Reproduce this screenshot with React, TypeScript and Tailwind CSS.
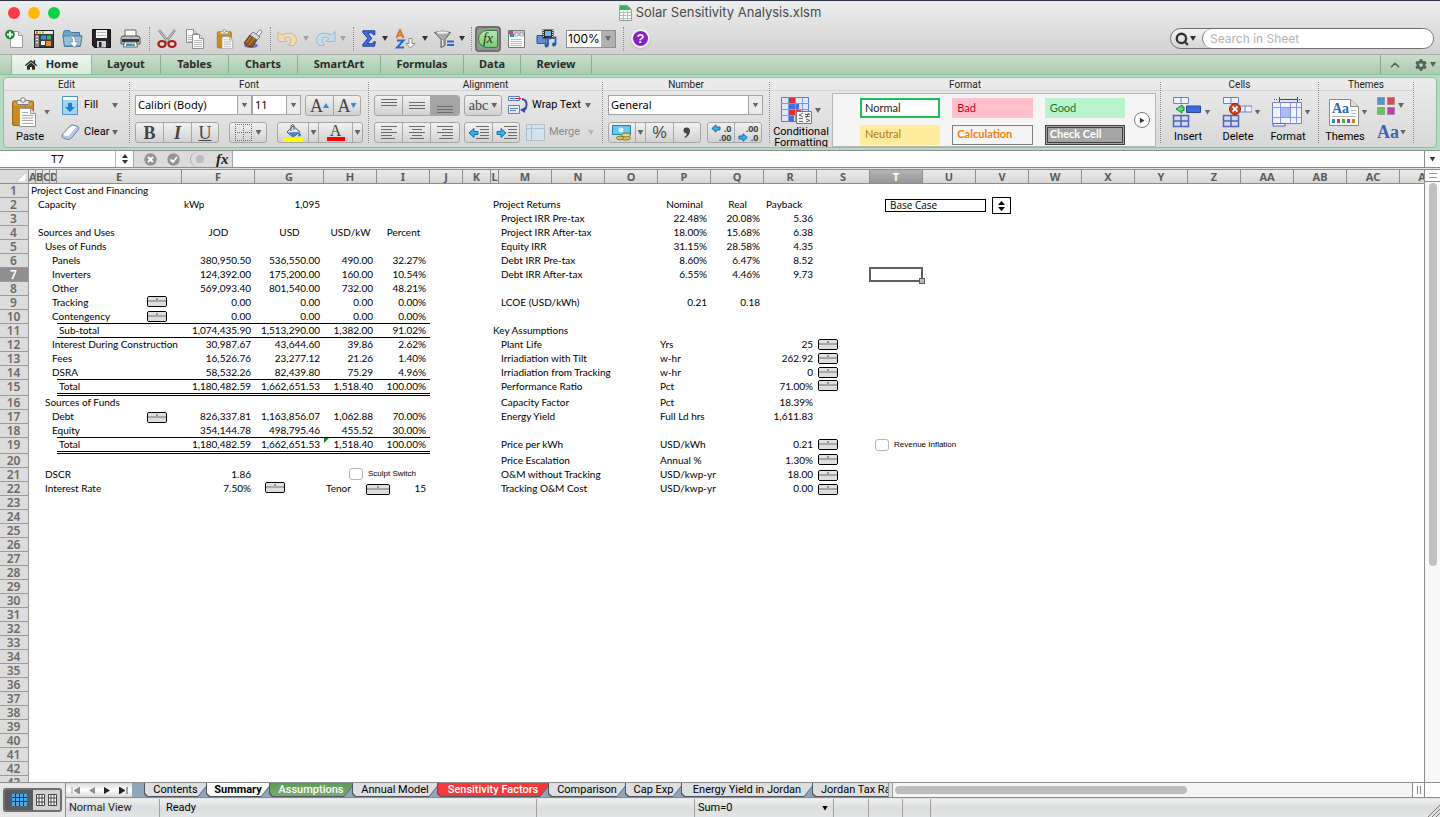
import type { ReactNode } from "react";
import { ChevronUp, Search } from "lucide-react";
import { FaHome, FaCog } from "react-icons/fa";

type Cell = { t?: string; a?: "l" | "r" | "c"; node?: ReactNode; flag?: boolean };

const columns: [string, number][] = [
  ["A", 7], ["B", 7], ["C", 7], ["D", 7], ["E", 125], ["F", 73], ["G", 69], ["H", 53], ["I", 53], ["J", 33], ["K", 28], ["L", 8],
  ["M", 53], ["N", 53], ["O", 53], ["P", 53], ["Q", 53], ["R", 53], ["S", 53], ["T", 53], ["U", 53], ["V", 53], ["W", 53],
  ["X", 53], ["Y", 53], ["Z", 53], ["AA", 53], ["AB", 53], ["AC", 53], ["AD", 53],
];
const rowHeaderWidth = 29;
const sheetWidth = columns.reduce((sum, c) => sum + c[1], rowHeaderWidth);
const rowNumbers = Array.from({ length: 43 }, (_, i) => i + 1);

const l = (t: string): Cell => ({ t });
const r = (t: string): Cell => ({ t, a: "r" });
const c = (t: string): Cell => ({ t, a: "c" });

function Spinner({ label, wide }: { label: string; wide?: boolean }) {
  return (
    <span className={`flex h-[11px] flex-col overflow-hidden rounded-[2px] border border-black bg-[#d9dadb] ${wide ? "w-6" : "w-5"}`}>
      <button aria-label={`Increase ${label}`} className="flex h-[5px] w-full justify-center border-b-2 border-[#a3a8ac] bg-[#dfe0e2]">
        <span className="mt-px h-[2px] w-[2px] bg-[#8f9499]" />
      </button>
      <button aria-label={`Decrease ${label}`} className="h-1 w-full bg-[#dcdddd]" />
    </span>
  );
}

function SheetCheck({ label }: { label: string }) {
  return (
    <label className="flex items-center gap-[5px] whitespace-nowrap font-['Liberation_Sans',sans-serif] text-[8px] leading-3">
      <input type="checkbox" className="h-3 w-[14px] appearance-none rounded-[3px] border border-[#b5b5b5] bg-white" />
      {label}
    </label>
  );
}

const spin = (label: string, cls: string, wide?: boolean): Cell => ({
  node: <div className={`absolute ${cls}`}><Spinner label={label} wide={wide} /></div>,
});

const cells: Record<string, Cell> = {
  A1: l("Project Cost and Financing"),
  B2: l("Capacity"), F2: l("kWp"), G2: r("1,095"),
  B4: l("Sources and Uses"), F4: c("JOD"), G4: c("USD"), H4: c("USD/kW"), I4: c("Percent"),
  C5: l("Uses of Funds"),
  D6: l("Panels"), F6: r("380,950.50"), G6: r("536,550.00"), H6: r("490.00"), I6: r("32.27%"),
  D7: l("Inverters"), F7: r("124,392.00"), G7: r("175,200.00"), H7: r("160.00"), I7: r("10.54%"),
  D8: l("Other"), F8: r("569,093.40"), G8: r("801,540.00"), H8: r("732.00"), I8: r("48.21%"),
  D9: l("Tracking"), E9: spin("tracking", "left-[90px] top-0"), F9: r("0.00"), G9: r("0.00"), H9: r("0.00"), I9: r("0.00%"),
  D10: l("Contengency"), E10: spin("contingency", "left-[90px] top-px"), F10: r("0.00"), G10: r("0.00"), H10: r("0.00"), I10: r("0.00%"),
  E11: l("Sub-total"), F11: r("1,074,435.90"), G11: r("1,513,290.00"), H11: r("1,382.00"), I11: r("91.02%"),
  D12: l("Interest During Construction"), F12: r("30,987.67"), G12: r("43,644.60"), H12: r("39.86"), I12: r("2.62%"),
  D13: l("Fees"), F13: r("16,526.76"), G13: r("23,277.12"), H13: r("21.26"), I13: r("1.40%"),
  D14: l("DSRA"), F14: r("58,532.26"), G14: r("82,439.80"), H14: r("75.29"), I14: r("4.96%"),
  E15: l("Total"), F15: r("1,180,482.59"), G15: r("1,662,651.53"), H15: r("1,518.40"), I15: r("100.00%"),
  C16: l("Sources of Funds"),
  D17: l("Debt"), E17: spin("debt", "left-[90px] top-[2px]"), F17: r("826,337.81"), G17: r("1,163,856.07"), H17: r("1,062.88"), I17: r("70.00%"),
  D18: l("Equity"), F18: r("354,144.78"), G18: r("498,795.46"), H18: r("455.52"), I18: r("30.00%"),
  E19: l("Total"), F19: r("1,180,482.59"), G19: r("1,662,651.53"), H19: { t: "1,518.40", a: "r", flag: true }, I19: r("100.00%"),
  C21: l("DSCR"), F21: r("1.86"),
  H21: { node: <div className="absolute left-[25px] top-0"><SheetCheck label="Sculpt Switch" /></div> },
  C22: l("Interest Rate"), F22: r("7.50%"), G22: spin("interest rate", "left-[10px] top-0"),
  H22: { t: "Tenor", node: <div className="absolute left-[42px] top-[2px]"><Spinner label="tenor" wide /></div> }, I22: r("15"),

  L2: l("Project Returns"), P2: c("Nominal"), Q2: c("Real"), R2: l("Payback"),
  M3: l("Project IRR Pre-tax"), P3: r("22.48%"), Q3: r("20.08%"), R3: r("5.36"),
  M4: l("Project IRR After-tax"), P4: r("18.00%"), Q4: r("15.68%"), R4: r("6.38"),
  M5: l("Equity IRR"), P5: r("31.15%"), Q5: r("28.58%"), R5: r("4.35"),
  M6: l("Debt IRR Pre-tax"), P6: r("8.60%"), Q6: r("6.47%"), R6: r("8.52"),
  M7: l("Debt IRR After-tax"), P7: r("6.55%"), Q7: r("4.46%"), R7: r("9.73"),
  M9: l("LCOE (USD/kWh)"), P9: r("0.21"), Q9: r("0.18"),
  L11: l("Key Assumptions"),
  M12: l("Plant Life"), P12: l("Yrs"), R12: r("25"), S12: spin("plant life", "left-px top-px"),
  M13: l("Irriadiation with Tilt"), P13: l("w-hr"), R13: r("262.92"), S13: spin("tilt", "left-px top-px"),
  M14: l("Irriadiation from Tracking"), P14: l("w-hr"), R14: r("0"), S14: spin("irradiation", "left-px top-px"),
  M15: l("Performance Ratio"), P15: l("Pct"), R15: r("71.00%"), S15: spin("performance ratio", "left-px top-0"),
  M16: l("Capacity Factor"), P16: l("Pct"), R16: r("18.39%"),
  M17: l("Energy Yield"), P17: l("Full Ld hrs"), R17: r("1,611.83"),
  M19: l("Price per kWh"), P19: l("USD/kWh"), R19: r("0.21"), S19: spin("price", "left-px top-px"),
  M20: l("Price Escalation"), P20: l("Annual %"), R20: r("1.30%"), S20: spin("escalation", "left-px top-0"),
  M21: l("O&M without Tracking"), P21: l("USD/kwp-yr"), R21: r("18.00"), S21: spin("O&M", "left-px top-[2px]"),
  M22: l("Tracking O&M Cost"), P22: l("USD/kwp-yr"), R22: r("0.00"), S22: spin("tracking O&M", "left-px top-[2px]"),

  T2: {
    node: (
      <div className="absolute -top-px left-[15px] flex items-center gap-[6px]">
        <div className="h-[13px] w-[101px] border border-black bg-white pl-1 font-['Open_Sans',sans-serif] text-[10px] leading-[11px]">Base Case</div>
        <button aria-label="Choose case" className="flex h-[17px] w-[19px] items-center justify-center border border-black bg-white">
          <svg width="7" height="10" viewBox="0 0 7 10"><path d="M3.5 0 7 4H0zM3.5 10 0 6h7z" /></svg>
        </button>
      </div>
    ),
  },
  T7: {
    node: (
      <div className="absolute -left-px -top-px h-[15px] w-[54px] border-2 border-[#5f5f63]">
        <span className="absolute -bottom-1 -right-1 h-[6px] w-[6px] border border-[#5f5f63] bg-[#b9b9bd]" />
      </div>
    ),
  },
  T19: { node: <div className="absolute left-[5px] top-px"><SheetCheck label="Revenue Inflation" /></div> },
};

// black rules under the totals, columns E to I
const singleRules = [10, 11, 14, 18];
const doubleRules = [15, 19];
const ruledColumns = ["E", "F", "G", "H", "I"];

function ruleClass(col: string, row: number) {
  if (!ruledColumns.includes(col)) return "";
  if (singleRules.includes(row)) return "border-b border-black";
  if (doubleRules.includes(row)) return "border-b-3 border-double border-black";
  return "";
}

const alignClass = { l: "text-left pl-[2px]", r: "text-right pr-1", c: "text-center" };

function Sheet() {
  return (
    <table className="table-fixed border-separate border-spacing-0 font-[Lato,sans-serif] text-[10px] text-black" style={{ width: sheetWidth }}>
      <colgroup>
        <col style={{ width: rowHeaderWidth }} />
        {columns.map(([name, w]) => <col key={name} style={{ width: w }} />)}
      </colgroup>
      <thead>
        <tr className="h-[14px] font-['Noto_Sans',sans-serif] text-[11px] leading-[13px] text-[#5c5c5c]">
          <th className="border-b border-r border-[#8c8c8c] bg-[#dcdcdc] p-0">
            <svg className="ml-auto mr-[2px]" width="10" height="10" viewBox="0 0 10 10"><path d="M10 0v10H0z" fill="#fff" stroke="#b0b0b0" strokeWidth="0.6" /></svg>
          </th>
          {columns.map(([name]) => (
            <th key={name} scope="col" className={`overflow-hidden border-b border-r border-[#8c8c8c] p-0 font-bold ${name === "T" ? "bg-linear-to-b from-[#b4b4b4] to-[#979797] text-white" : "bg-linear-to-b from-[#ebebeb] to-[#d6d6d6]"}`}>
              {name}
            </th>
          ))}
        </tr>
      </thead>
      <tbody>
        {rowNumbers.map((row) => (
          <tr key={row} className={doubleRules.includes(row) ? "h-4" : "h-[14px]"}>
            <th scope="row" className={`border-b border-r border-[#9a9a9a] p-0 pr-px align-top font-['Noto_Sans',sans-serif] text-xs font-semibold leading-[13px] ${row === 7 ? "bg-[#8f8f8f] text-white" : "bg-[#dcdcdc] text-[#6b6b6b]"}`}>
              {row}
            </th>
            {columns.map(([name]) => {
              const cell = cells[name + row];
              return (
                <td key={name} className={`relative whitespace-nowrap p-0 align-top leading-[13px] ${alignClass[cell?.a ?? "l"]} ${ruleClass(name, row)}`}>
                  {cell?.flag && <span className="absolute left-0 top-0 h-[5px] w-[5px] bg-[#148a1c] [clip-path:polygon(0_0,100%_0,0_100%)]" />}
                  {cell?.a === "r" || cell?.a === "c" ? cell.t : cell?.t && <span className="block w-0">{cell.t}</span>}
                  {cell?.node}
                </td>
              );
            })}
          </tr>
        ))}
      </tbody>
    </table>
  );
}

/* ---------- small shared pieces ---------- */

function Caret({ className = "bg-[#666]" }: { className?: string }) {
  return <span className={`inline-block h-[5px] w-[6px] shrink-0 [clip-path:polygon(0_0,100%_0,50%_100%)] ${className}`} />;
}

function Dots({ className = "" }: { className?: string }) {
  return <span className={`w-0 shrink-0 border-l border-dotted border-[#8c8c8c] ${className}`} />;
}

function Tool({ label, width = "w-[29px]", children }: { label: string; width?: string; children: ReactNode }) {
  return <button aria-label={label} className={`flex h-[26px] shrink-0 items-center justify-center ${width}`}>{children}</button>;
}

function Svg({ w, h, children }: { w: number; h: number; children: ReactNode }) {
  return <svg width={w} height={h} viewBox={`0 0 ${w} ${h}`} fill="none" className="shrink-0">{children}</svg>;
}

function PageIcon({ x = 0, y = 0, w = 12, h = 16 }: { x?: number; y?: number; w?: number; h?: number }) {
  const lines = [];
  for (let i = 6; i < h - 1; i += 2) lines.push(`M2 ${i}.5h${w - 4}`);
  return (
    <g transform={`translate(${x} ${y})`}>
      <path d={`M.5 .5h${w - 5}l4 4v${h - 5}H.5z`} fill="#fcfcfc" stroke="#8f8f8f" />
      <path d={`M${w - 4.5} .5v4h4`} stroke="#8f8f8f" fill="#e2e2e2" />
      <path d={lines.join("")} stroke="#b5b5b5" />
    </g>
  );
}

function ClipboardIcon({ w, h }: { w: number; h: number }) {
  return (
    <svg width={w} height={h} viewBox="0 0 24 30" fill="none" className="shrink-0">
      <rect x="0.5" y="4" width="21" height="24.5" rx="1.5" fill="#c98b1e" stroke="#9a6812" />
      <path d="M2 5.500h18v3H2z" fill="#dca53c" />
      <rect x="5" y="3.500" width="12" height="4" rx="1" fill="#e9e9e9" stroke="#7d7d7d" />
      <circle cx="11" cy="3" r="2.300" fill="#f4f4f4" stroke="#7d7d7d" />
      <path d="M7.500 11.500h11l5 5v13h-16z" fill="#fbfbfb" stroke="#989898" />
      <path d="M18.500 11.500v5h5" fill="#dedede" stroke="#989898" />
      <path d="M10 15.500h6M10 18.500h11M10 21h11M10 23.500h11M10 26.500h11" stroke="#aaa" />
    </svg>
  );
}

/* ---------- title bar and standard toolbar ---------- */

function TitleBar() {
  return (
    <div className="relative flex h-6 items-center justify-center">
      <div className="absolute left-2 flex gap-2">
        <button aria-label="Close" className="h-3 w-3 rounded-full bg-[#fc3b46]" />
        <button aria-label="Minimize" className="h-3 w-3 rounded-full bg-[#fdb908]" />
        <button aria-label="Zoom window" className="h-3 w-3 rounded-full bg-[#09d144]" />
      </div>
      <div className="flex items-center gap-1 font-[Inter,sans-serif] text-[13px] text-[#4a4a4a]">
        <Svg w={13} h={16}>
          <path d="M.5 .5h8l4 4v11H.5z" fill="#fafafa" stroke="#999" />
          <path d="M1 1h7.500l3 3v1H1z" fill="#37b35a" />
          <path d="M1 7.500h11M1 10.500h11M1 13.500h11M4.500 6v9M8.500 6v9" stroke="#a9c8b1" />
        </Svg>
        Solar Sensitivity Analysis.xlsm
      </div>
    </div>
  );
}

function Toolbar() {
  return (
    <div className="flex h-[29px] items-center pb-[2px]">
      <Tool label="New">
        <Svg w={20} h={20}>
          <path d="M5.500 2.500h8l4 4v12h-12z" fill="#fdfdfd" stroke="#999" /><path d="M13.500 2.500v4h4" stroke="#999" fill="#e6e6e6" />
          <circle cx="5" cy="5.500" r="4.800" fill="#128a2c" /><path d="M5 2.500v6M2 5.500h6" stroke="#fff" strokeWidth="2" />
        </Svg>
      </Tool>
      <Tool label="Template gallery">
        <Svg w={20} h={18}>
          <rect x=".5" y=".5" width="19" height="17" fill="#3c3c3c" stroke="#222" /><path d="M1 1h18v3H1z" fill="#e8e8e8" />
          <path d="M2 1.500h2v2H2z" fill="#e33" /><path d="M5 1.500h2v2H5z" fill="#e9b22a" /><path d="M8 1.500h2v2H8z" fill="#4b4" />
          <path d="M1 5h4v12H1z" fill="#8a8a8a" /><path d="M7 5.500h5v4H7z" fill="#3a8ee6" /><path d="M13 5.500h4v4h-4z" fill="#37b36a" />
          <path d="M7 11h4v4H7z" fill="#f0f0f0" /><path d="M12 11h5v5h-5z" fill="#f08a1f" /><path d="M2 6.500h2M2 9.500h2M2 12.500h2" stroke="#eee" />
        </Svg>
      </Tool>
      <Tool label="Open">
        <Svg w={21} h={20}>
          <path d="M1.500 3.500q0-2 2-2h4l2 2h8v3h2l-1.500 11H2.500L1 7z" fill="#6fa3c4" stroke="#47789a" /><path d="M1 7h19l-1.500 10h-16z" fill="#94c0da" stroke="#4f82a3" />
          <path d="M9.500 7q4 0 4 6h3l-4 6-5-6h3q0-4-2-6z" fill="#fff" stroke="#8a9aa5" />
        </Svg>
      </Tool>
      <Tool label="Save">
        <Svg w={19} h={19}>
          <path d="M.5 .5h18v18h-16l-2-2z" fill="#24262b" stroke="#111" /><path d="M4 1h11v8H4z" fill="#f3f3f3" /><path d="M5 3.500h9M5 6.500h9" stroke="#b9b9b9" />
          <path d="M5 12h9v6.500H5z" fill="#c9cdd3" /><path d="M7 13h2.500v5H7z" fill="#24262b" />
        </Svg>
      </Tool>
      <Tool label="Print">
        <Svg w={21} h={19}>
          <path d="M5 1h11v7H5z" fill="#fff" stroke="#666" /><path d="M1 10q0-3 2-3h15q2 0 2 3v5H1z" fill="#bdbdbd" stroke="#555" /><path d="M2 10h17v3H2z" fill="#333" />
          <path d="M4.500 13h12l1 5h-14z" fill="#fff" stroke="#666" /><path d="M6 14.500h5v2.500H6z" fill="#2c8fdc" /><path d="M11 14.500h4v2.500h-4z" fill="#37b36a" />
        </Svg>
      </Tool>
      <Dots className="ml-1 mr-[2px] h-6" />
      <Tool label="Cut">
        <Svg w={20} h={20}>
          <path d="M2 1 12 14M18 1 8 14" stroke="#858585" strokeWidth="2.600" /><path d="M2 1 12 14M18 1 8 14" stroke="#e4e4e4" strokeWidth=".8" />
          <ellipse cx="5" cy="15" rx="3.600" ry="3" stroke="#a81d16" strokeWidth="2.200" /><ellipse cx="15" cy="15" rx="3.600" ry="3" stroke="#a81d16" strokeWidth="2.200" />
        </Svg>
      </Tool>
      <Tool label="Copy"><Svg w={19} h={20}><PageIcon w={12} h={14} /><PageIcon x={6} y={5} w={12} h={15} /></Svg></Tool>
      <Tool label="Paste"><ClipboardIcon w={18} h={20} /></Tool>
      <Tool label="Format painter">
        <Svg w={21} h={20}>
          <ellipse cx="8" cy="16.500" rx="7" ry="2.500" fill="#5b4fd0" opacity=".8" />
          <path d="m1 14 6-8 7 5-5 7q-5 0-8-4z" fill="#8a5a22" stroke="#5d3a10" /><path d="m3 14 5-6M6 16l5-7" stroke="#c08a3c" />
          <path d="m7 6 3-3 7 5-3 3z" fill="#d9d9d9" stroke="#777" /><path d="m13 5 3.500-4q2.500-.5 2.500 2l-3 4z" fill="#f5f5f5" stroke="#888" />
        </Svg>
      </Tool>
      <Dots className="ml-[2px] mr-[2px] h-6" />
      <Tool label="Undo" width="w-7">
        <Svg w={21} h={17}><path d="M1 1.500v10h9L7 8.500Q12 5.500 13.500 8.500T11.500 15.500h5.500Q21.500 10 18 5.500T4.500 5z" fill="#efdcb6" stroke="#d5b880" /></Svg>
      </Tool>
      <Caret className="mx-[2px] bg-[#a3a3a3]" />
      <Tool label="Redo">
        <Svg w={21} h={17}><path d="M20 1.500v10h-9L14 8.500Q9 5.500 7.500 8.500T9.500 15.500H4Q-.5 10 3 5.500T16.500 5z" fill="#c6dce8" stroke="#96bacf" /></Svg>
      </Tool>
      <Caret className="bg-[#a3a3a3]" />
      <Dots className="ml-[7px] mr-1 h-6" />
      <Tool label="AutoSum" width="w-[22px]">
        <Svg w={14} h={17}><path d="M.8 .8h12v4h-1.500q0-1.800-1.700-1.800H5.500l4.300 5.300L5 13.700h4.800q1.700 0 2-2h1.500l-.8 4.500H.8v-1.700l5-6.200-5-5.800z" fill="#3e6fdf" stroke="#1d3aa6" /></Svg>
      </Tool>
      <Caret className="mx-[2px] bg-[#333]" />
      <Tool label="Sort" width="w-[31px]">
        <Svg w={21} h={20}>
          <path d="M1.500 9 5 1l3.500 8M2.800 6.500h4.500" stroke="#d5782a" strokeWidth="2" /><path d="M2 11.500h6.500L2 18.500h7" stroke="#2f66c9" strokeWidth="2" />
          <path d="M14 9.500h3v5h3l-4.500 4.500-4.500-4.500h3z" fill="#fff" stroke="#8c8c8c" />
        </Svg>
      </Tool>
      <Caret className="mx-px bg-[#333]" />
      <Tool label="Filter" width="w-[30px]">
        <Svg w={21} h={18}>
          <path d="M.5 2.500q8-3 16 0L11 9.500v6l-4 2v-8z" fill="#a9a9a9" stroke="#5f5f5f" /><ellipse cx="8.500" cy="2.500" rx="6" ry="1.300" fill="#ececec" /><path d="M8.500 10v6" stroke="#eee" />
          <path d="M13 11.500h7M13 15h7" stroke="#2f66c9" strokeWidth="2" />
        </Svg>
      </Tool>
      <Caret className="bg-[#333]" />
      <Dots className="ml-[6px] mr-[3px] h-6" />
      <button aria-label="Formula builder" className="flex h-[26px] w-[26px] shrink-0 items-center justify-center rounded-[4px] border-2 border-[#6f6f6f] bg-[#8f9a90]">
        <span className="flex h-[18px] w-5 items-center justify-center rounded-l-[9px] rounded-r-[2px] border border-[#3c7a3c] bg-linear-to-b from-[#b9e5ad] to-[#7cc878] font-['Liberation_Serif',serif] text-sm italic leading-4 text-[#123d12]">fx</span>
      </button>
      <Tool label="Toolbox" width="w-[31px]">
        <Svg w={17} h={19}>
          <path d="M.5 1.500h16v17H.5z" fill="#fdfdfd" stroke="#777" /><path d="M1 2h15v5H1z" fill="#c4c9d0" /><path d="M1 2h4v3H1z" fill="#e9442b" /><path d="M2 5h4v3H2z" fill="#2f88d8" />
          <path d="M7 4h3v3H7zM12 4h3v3h-3z" fill="#fff" stroke="#888" strokeWidth=".7" /><path d="M3 10.500h11M3 12.500h11M3 14.500h11M3 16.500h11" stroke="#bdbdbd" />
        </Svg>
      </Tool>
      <Tool label="Media" width="w-7">
        <Svg w={21} h={19}>
          <path d="M1 6.500h9v8H1z" fill="#5b8fd8" stroke="#2a519b" /><path d="M6.500 .5h11v9h-11z" fill="#2a2a2a" /><path d="M9 2h6v5H9z" fill="#6fb8e8" /><path d="M7.500 1v8M16.500 1v8" stroke="#ddd" strokeDasharray="1 1" />
          <path d="M12 16.500V9.500l7.500-1v7" stroke="#2858a6" strokeWidth="1.800" /><circle cx="10.500" cy="16.500" r="2" fill="#2858a6" /><circle cx="18" cy="15.500" r="2" fill="#2858a6" />
        </Svg>
      </Tool>
      <div className="ml-[6px] flex h-[18px] w-[50px] shrink-0 border border-[#8f8f8f] bg-white">
        <input aria-label="Zoom level" defaultValue="100%" className="w-[34px] pl-[1px] font-[Inter,sans-serif] text-[12px] text-black" />
        <button aria-label="Zoom list" className="flex flex-1 items-center justify-center bg-[#b1b1b1]"><Caret /></button>
      </div>
      <Dots className="ml-[7px] mr-[7px] h-6" />
      <button aria-label="Help" className="flex h-[19px] w-[19px] shrink-0 items-center justify-center rounded-full border-2 border-[#f3f3f3] bg-[#8b1ec9] font-['Liberation_Sans',sans-serif] text-[13px] font-bold leading-4 text-white shadow">?</button>
      <label className="ml-auto mr-[6px] flex h-[21px] w-[264px] shrink-0 items-center rounded-full border border-[#6e6e6e] bg-linear-to-b from-[#f4f4f4] to-[#d4d4d4] pl-1">
        <Search size={14} strokeWidth={4} className="text-[#333]" />
        <Caret className="ml-px bg-[#333]" />
        <input aria-label="Search in Sheet" placeholder="Search in Sheet" className="ml-[6px] h-full min-w-0 flex-1 rounded-full border-l border-[#777] bg-white pl-[7px] font-[Inter,sans-serif] text-[12px] placeholder-[#b4b4b4]" />
      </label>
    </div>
  );
}

/* ---------- ribbon ---------- */

const ribbonTabs = [
  ["Layout", "w-[69px]"], ["Tables", "w-[68px]"], ["Charts", "w-[69px]"], ["SmartArt", "w-[83px]"],
  ["Formulas", "w-[83px]"], ["Data", "w-[57px]"], ["Review", "w-[71px]"],
];

function RibbonTabs() {
  return (
    <div className="flex h-5 border-b border-[#8fbf9d] bg-linear-to-b from-[#c9dfcb] to-[#a9cbae] font-['Noto_Sans',sans-serif] text-[11px] font-bold text-[#2b2b2b]">
      <span className="w-3 border-r border-[#8ebb97]" />
      <button className="flex w-20 items-center justify-center gap-[9px] border-r border-[#8ebb97] bg-linear-to-b from-[#eef6ef] to-[#d9ebdd]">
        <FaHome size={12} />
        Home
      </button>
      {ribbonTabs.map(([name, width]) => (
        <button key={name} className={`border-r border-[#84b48f] ${width}`}>{name}</button>
      ))}
      <div className="ml-auto flex items-center gap-[13px] border-l border-[#84a88b] pl-[7px] pr-1 text-[#56645a]">
        <button aria-label="Collapse ribbon"><ChevronUp size={14} strokeWidth={3} /></button>
        <button aria-label="Ribbon settings" className="flex items-center gap-[3px]"><FaCog size={12} /><Caret className="bg-[#56645a]" /></button>
      </div>
    </div>
  );
}

function Group({ title, width, children }: { title: string; width: string; children: ReactNode }) {
  return (
    <section className={`flex shrink-0 flex-col ${width}`}>
      <h2 className="h-[13px] border-b border-[#d2d2d2] text-center text-[10px] leading-[13px] text-[#222]">{title}</h2>
      <div className="flex flex-1 pt-1">{children}</div>
    </section>
  );
}

function Seg({ label, width = "w-7", on, children }: { label: string; width?: string; on?: boolean; children: ReactNode }) {
  return (
    <button aria-label={label} className={`flex h-full items-center justify-center border-r border-[#a6a6a6] last:border-r-0 ${width} ${on ? "bg-[#a5a5a5]" : ""}`}>{children}</button>
  );
}

function Segs({ children, className = "" }: { children: ReactNode; className?: string }) {
  return <div className={`flex h-[21px] shrink-0 overflow-hidden rounded-[3px] border border-[#a6a6a6] bg-linear-to-b from-[#f1f1f1] to-[#d2d2d2] ${className}`}>{children}</div>;
}

function Combo({ label, value, width }: { label: string; value: string; width: string }) {
  return (
    <div className={`flex h-5 shrink-0 border border-[#a3a3a3] bg-white font-['Noto_Sans',sans-serif] ${width}`}>
      <input aria-label={label} defaultValue={value} className="min-w-0 flex-1 pl-[2px] text-[11px] text-black" />
      <button aria-label={`${label} list`} className="flex w-[14px] items-center justify-center border-l border-[#a3a3a3] bg-[#ececec]"><Caret /></button>
    </div>
  );
}

const lineArt: Record<string, string> = {
  top: "M0 .5h16M0 3.500h16M0 6.500h16",
  middle: "M0 3.500h16M0 6.500h16M0 9.500h16",
  bottom: "M0 7.500h16M0 10.500h16M0 13.500h16",
  left: "M0 .5h16M0 3.500h11M0 6.500h16M0 9.500h11M0 12.500h14",
  center: "M0 .5h16M3 3.500h10M0 6.500h16M3 9.500h10M1 12.500h14",
  right: "M0 .5h16M5 3.500h11M0 6.500h16M5 9.500h11M2 12.500h14",
};

function Lines({ kind }: { kind: string }) {
  return <Svg w={16} h={14}><path d={lineArt[kind]} stroke="#6b6b6b" /></Svg>;
}

function ArrowIcon({ right }: { right?: boolean }) {
  return (
    <Svg w={21} h={14}>
      <path d="M8 .5h13M12 3.500h9M12 6.500h9M12 9.500h9M8 12.500h13" stroke="#6b6b6b" />
      <path d={right ? "M1 5.500h4v-3l5 4.500-5 4.500v-3H1z" : "M10 5.500H6v-3L1 7l5 4.500v-3h4z"} fill="#35b5ea" stroke="#0d6ea8" />
    </Svg>
  );
}

function DecimalIcon({ less }: { less?: boolean }) {
  return (
    <span className="relative block h-[18px] w-[21px] font-['Noto_Sans',sans-serif] text-[9px] font-bold leading-[9px] text-[#444]">
      <span className="absolute right-0 top-0">{less ? ".00" : ".0"}</span>
      <span className="absolute bottom-0 right-0">{less ? ".0" : ".00"}</span>
      <svg className={`absolute left-0 ${less ? "bottom-0 rotate-180" : "top-0"}`} width="10" height="9" viewBox="0 0 10 9"><path d="M9 3H5V.8L.8 4.500 5 8.200V6h4z" fill="#35b5ea" stroke="#0d6ea8" /></svg>
    </span>
  );
}

function CellBlocks({ children }: { children: ReactNode }) {
  return (
    <Svg w={30} h={31}>
      <path d="M1.500 .5h15v6h-15zM9 .5v6" fill="#eef2ff" stroke="#6f80cc" />
      <path d="M1.500 18.500h15v11h-15zM9 18.500v11M1.500 24h15" fill="#cfdafa" stroke="#5364b0" strokeWidth="1.500" />
      {children}
    </Svg>
  );
}

function BigButton({ label, icon, width }: { label: string; icon: ReactNode; width: string }) {
  return (
    <button className={`flex shrink-0 flex-col ${width}`}>
      <span className="flex h-[34px] w-full items-center justify-center gap-[3px] pr-[2px]">{icon}<Caret /></span>
      <span className="-ml-2 self-center leading-4">{label}</span>
    </button>
  );
}

const cellStyles = [
  ["Normal", "border-2 border-[#17c35a] bg-white text-[#222] pl-[3px]"],
  ["Bad", "bg-[#ffc0cb] text-[#c00020] pl-[5px]"],
  ["Good", "bg-[#bcf3cf] text-[#0a7d2c] pl-[5px]"],
  ["Neutral", "bg-[#ffeb9c] text-[#b4770c] pl-[5px]"],
  ["Calculation", "border border-[#7f7f7f] bg-[#f4f4f4] font-bold text-[#fa7d00] pl-1"],
  ["Check Cell", "border-3 border-double border-[#3f3f3f] bg-[#a5a5a5] font-bold text-white pl-[2px]"],
];

const themeSwatches = ["#4f94cf", "#d94a5a", "#67c55b", "#b445b5"];

function Ribbon() {
  return (
    <div className="bg-[#b5dcc2] px-[3px] py-[2px] font-[Roboto,sans-serif] text-[11px] text-black">
      <div className="flex h-[71px] overflow-hidden rounded-[4px] border border-[#8fbf9d] bg-linear-to-b from-[#ececec] to-[#d8d8d8]">
        <Group title="Edit" width="w-[125px]">
          <button className="flex w-[54px] shrink-0 flex-col items-start pl-2">
            <span className="flex h-[34px] items-center gap-2"><ClipboardIcon w={24} h={30} /><Caret /></span>
            <span className="pl-1 leading-4">Paste</span>
          </button>
          <div className="flex flex-1 flex-col gap-[6px]">
            <button className="flex h-[21px] w-full items-center pl-1">
              <Svg w={16} h={19}><path d="M.5 .5h15v18H.5z" fill="#a4d3f2" stroke="#4e94c4" /><path d="M1 1h14v3H1z" fill="#fff" /><path d="M6 7h4v4h3l-5 5-5-5h3z" fill="#1f7fd6" /></Svg>
              <span className="ml-[6px] w-7 text-left">Fill</span><Caret />
            </button>
            <button className="flex h-[21px] w-full items-center pl-[3px]">
              <Svg w={19} h={17}><path d="m1 11 8-9q2-1.500 4-.8l4 1.300q1.500 1 .5 3l-7 8.500q-2 2-4 1.500l-4-1.300Q.5 13.500 1 11z" fill="#b9c4e2" stroke="#6f7fae" /><path d="m2 10.500 8-8.500q2-1 5.500 1l-8 9q-3 .5-5.500-1.500z" fill="#fff" /></Svg>
              <span className="ml-1 w-7 text-left">Clear</span><Caret />
            </button>
          </div>
        </Group>
        <Dots className="my-1" />
        <Group title="Font" width="w-[238px]">
          <div className="flex flex-col gap-[6px] pl-[5px]">
            <div className="flex">
              <Combo label="Font" value="Calibri (Body)" width="w-[117px]" />
              <Combo label="Font size" value="11" width="w-[49px]" />
              <Segs className="ml-1 font-['Liberation_Serif',serif] text-lg leading-5 text-[#444]">
                <Seg label="Grow font">A<Caret className="rotate-180 bg-[#2d8ddb]" /></Seg>
                <Seg label="Shrink font" width="w-[26px]">A<Caret className="bg-[#2d8ddb]" /></Seg>
              </Segs>
            </div>
            <div className="flex font-['Liberation_Serif',serif] text-lg leading-5 text-[#444]">
              <Segs>
                <Seg label="Bold"><b>B</b></Seg>
                <Seg label="Italic"><i className="font-bold">I</i></Seg>
                <Seg label="Underline" width="w-[26px]"><u>U</u></Seg>
              </Segs>
              <Segs className="ml-[10px]">
                <Seg label="Borders" width="w-9">
                  <Svg w={17} h={17}><path d="M.5 0v17M8.500 0v17M16.500 0v17M0 .5h17M0 8.500h17M0 16.500h17" stroke="#666" strokeDasharray="1 1" /></Svg>
                  <Caret className="ml-1 bg-[#666]" />
                </Seg>
              </Segs>
              <Segs className="ml-[10px]">
                <Seg label="Fill color" width="w-[31px]">
                  <Svg w={20} h={18}>
                    <path d="m4 8 6-6 7 6-7 5z" fill="#dfe7ee" stroke="#555" /><path d="m5 8.500 11-.5-6 5z" fill="#3d83c9" /><path d="M8 7V1.500q2-2 3 0V6" stroke="#555" /><path d="M16.500 8q3 4 0 4.500T16.500 8z" fill="#3d83c9" />
                    <path d="M0 14h20v4H0z" fill="#ffff00" />
                  </Svg>
                </Seg>
                <Seg label="Fill color list" width="w-[10px]"><Caret /></Seg>
                <Seg label="Font color" width="w-[34px]"><span className="w-[18px] border-b-4 border-[#f00] text-base leading-[13px]">A</span></Seg>
                <Seg label="Font color list" width="w-[9px]"><Caret /></Seg>
              </Segs>
            </div>
          </div>
        </Group>
        <Dots className="my-1" />
        <Group title="Alignment" width="w-[233px]">
          <div className="flex flex-col gap-[6px] pl-[5px]">
            <div className="flex">
              <Segs>
                <Seg label="Align top"><Lines kind="top" /></Seg>
                <Seg label="Align middle"><Lines kind="middle" /></Seg>
                <Seg label="Align bottom" on><Lines kind="bottom" /></Seg>
              </Segs>
              <Segs className="ml-1"><Seg label="Orientation" width="w-9"><span className="font-['Liberation_Serif',serif] text-sm leading-4 text-[#444]">abc</span><Caret className="ml-[3px] bg-[#666]" /></Seg></Segs>
              <button className="ml-[6px] flex items-center">
                <Svg w={21} h={19}>
                  <path d="M.5 .5h11v4H.5zM.5 9.500h11v8H.5z" fill="#eaf0fb" stroke="#5b7fc4" /><path d="M2 2.500h6" stroke="#5b7fc4" /><path d="M8 2.500h5" stroke="#e22" /><path d="M2 12.500h8M2 14.500h6" stroke="#5b7fc4" />
                  <path d="M14 3q5 1 4.500 6t-3.500 6" stroke="#3a4ba0" strokeWidth="2" /><path d="m12 14 5-3v6z" fill="#3a4ba0" />
                </Svg>
                <span className="ml-[3px] w-[53px] whitespace-nowrap text-left">Wrap Text</span><Caret />
              </button>
            </div>
            <div className="flex">
              <Segs>
                <Seg label="Align left"><Lines kind="left" /></Seg>
                <Seg label="Align center"><Lines kind="center" /></Seg>
                <Seg label="Align right"><Lines kind="right" /></Seg>
              </Segs>
              <Segs className="ml-1">
                <Seg label="Decrease indent"><ArrowIcon /></Seg>
                <Seg label="Increase indent" width="w-[26px]"><ArrowIcon right /></Seg>
              </Segs>
              <button className="ml-[6px] flex items-center text-[#8a8a8a]">
                <Svg w={19} h={17}><path d="M.5 .5h18v16H.5z" fill="#d6e2ea" stroke="#adbfcc" /><path d="M5.500 .5v16M.5 4.500h18" stroke="#adbfcc" /></Svg>
                <span className="ml-1 w-[39px] text-left">Merge</span><Caret className="bg-[#b5b5b5]" />
              </button>
            </div>
          </div>
        </Group>
        <Dots className="my-1" />
        <Group title="Number" width="w-[166px]">
          <div className="flex flex-col gap-[7px] pl-[5px]">
            <Combo label="Number format" value="General" width="w-[155px]" />
            <div className="flex">
              <Segs className="font-['Liberation_Sans',sans-serif] text-base text-[#444]">
                <Seg label="Currency" width="w-[27px]">
                  <Svg w={20} h={17}><path d="M.5 1.500h18v9H.5z" fill="#6bc5ec" stroke="#1f7fae" /><circle cx="9" cy="6" r="2.500" fill="#d6f0fb" /><ellipse cx="14" cy="14" rx="4.500" ry="2" fill="#d9ca62" stroke="#85782a" /><ellipse cx="14" cy="11" rx="4.500" ry="2" fill="#e6da7c" stroke="#85782a" /><ellipse cx="8" cy="14" rx="3.500" ry="1.800" fill="#d9ca62" stroke="#85782a" /></Svg>
                </Seg>
                <Seg label="Currency list" width="w-[10px]"><Caret /></Seg>
                <Seg label="Percent style">%</Seg>
                <Seg label="Comma style" width="w-[26px]">
                  <Svg w={8} h={12}><path d="M3.500 .5a3 3 0 0 1 3.500 3q0 4.500-5 7.500l-.5-1q2.500-2 2.500-3.500-3.500 0-3.500-3a3 3 0 0 1 3-3z" fill="#444" /></Svg>
                </Seg>
              </Segs>
              <Segs className="ml-[6px]">
                <Seg label="Increase decimal" width="w-[27px]"><DecimalIcon /></Seg>
                <Seg label="Decrease decimal" width="w-[26px]"><DecimalIcon less /></Seg>
              </Segs>
            </div>
          </div>
        </Group>
        <Dots className="my-1" />
        <Group title="Format" width="w-[390px]">
          <button className="flex w-[62px] shrink-0 flex-col items-center">
            <span className="flex h-[31px] items-start gap-[3px] pt-[2px]">
              <Svg w={31} h={28}>
                <path d="M.5 .5h27v24H.5z" fill="#dfe7fc" stroke="#5b78cf" /><path d="M7 1h7v6H7zM7 13h13v5H7z" fill="#e32f2f" /><path d="M7 7h11v5H7zM7 19h6v5H7z" fill="#3f6fe0" />
                <path d="M7.500 0v25M14.500 0v25M21.500 0v25M0 6.500h28M0 12.500h28M0 18.500h28" stroke="#7f97dd" /><path d="M15.500 14.500h15v12h-15z" fill="#f6f6f6" stroke="#777" />
                <path d="m22 16-4 2 4 2M18 21.500h4M24 17.500h5M24 19.500h5M28 16l-3 5M25 22l4 1.500-4 1.500M18 24.500h4" stroke="#444" strokeWidth=".8" />
              </Svg>
              <Caret className="mt-[11px] bg-[#666]" />
            </span>
            <span className="leading-[11px]">Conditional Formatting</span>
          </button>
          <div className="-mt-[2px] flex h-[54px] w-[324px] border border-[#b5b5b5] bg-[#f5f5f5]">
            <div className="ml-[27px] grid w-[265px] shrink-0 grid-cols-3 gap-x-3 gap-y-[5px] pt-1">
              {cellStyles.map(([name, style]) => (
                <button key={name} className={`flex h-5 items-center pb-[2px] text-left font-[Lato,sans-serif] text-[11px] leading-none ${style}`}>{name}</button>
              ))}
            </div>
            <button aria-label="More styles" className="ml-[9px] flex h-4 w-4 shrink-0 items-center justify-center self-center rounded-full border border-[#777] bg-white"><Caret className="-rotate-90 bg-[#333]" /></button>
          </div>
        </Group>
        <Dots className="my-1" />
        <Group title="Cells" width="w-[157px]">
          <BigButton label="Insert" width="w-14 pl-[6px]" icon={<CellBlocks><path d="M14.500 9h14v6.500h-14z" fill="#3d6be0" stroke="#2747a8" /><path d="M10 10v-2L4 12l6 4v-2.500h2V10z" fill="#5fe07a" stroke="#128a2c" /></CellBlocks>} />
          <BigButton label="Delete" width="w-[50px]" icon={<CellBlocks><path d="M16 9h14v6H16zM23 9v6" fill="#eef2ff" stroke="#6f80cc" /><circle cx="13" cy="12" r="5.500" fill="#d9421c" stroke="#8e2508" /><path d="m10.500 9.500 5 5m0-5-5 5" stroke="#fff" strokeWidth="1.800" /></CellBlocks>} />
          <BigButton label="Format" width="w-[50px]" icon={
            <Svg w={30} h={31}><path d="M.5 5.500h29v21H.5z" fill="#f1f4ff" stroke="#6f80cc" /><path d="M9 10h9v11H9z" fill="#a9bdf5" /><path d="M8.500 5v22M18.500 5v22M24.500 5v22M0 10.500h30M0 20.500h30" stroke="#8797dd" /><path d="M1 26.500h12v2.500H1z" fill="#fff" stroke="#5364b0" /><path d="M7 2.500h18" stroke="#34469c" /><path d="M2 2.500h3M27 2.500h3" stroke="#34469c" strokeDasharray="1 1" /><path d="M7.500 0v5M25.500 0v5" stroke="#34469c" /></Svg>
          } />
        </Group>
        <Dots className="my-1" />
        <Group title="Themes" width="w-[94px]">
          <BigButton label="Themes" width="w-[58px] pl-[2px]" icon={
            <Svg w={30} h={27}>
              <path d="M.5 .5h21l8 7v19H.5z" fill="#fff" stroke="#888" /><path d="M21.500 .5v7h8" fill="#ddd" stroke="#888" />
              <text x="3" y="14" fontSize="14" fontFamily="Liberation Serif, serif" fill="#2868b8" fontWeight="bold">Aa</text>
              <path d="M3 17.500h24M22 11.500h5M22 14.500h5" stroke="#bbb" /><path d="M3 20h3v4H3z" fill="#3d83c9" /><path d="M8 20h3v4H8z" fill="#cc3f4e" /><path d="M13 20h3v4h-3z" fill="#4fae48" /><path d="M18 20h3v4h-3z" fill="#9b3fae" /><path d="M23 20h3v4h-3z" fill="#e07b22" />
            </Svg>
          } />
          <div className="flex flex-col gap-1">
            <button aria-label="Theme colors" className="flex h-[21px] items-center gap-[3px]">
              <Svg w={18} h={18}>{themeSwatches.map((color, i) => <rect key={color} x={(i % 2) * 10 + 0.5} y={i < 2 ? 0.5 : 10.5} width="7" height="7" fill={color} stroke="#777" strokeOpacity=".5" />)}</Svg>
              <Caret />
            </button>
            <button aria-label="Theme fonts" className="flex h-6 items-center gap-px font-['Liberation_Serif',serif] text-lg font-bold text-[#3f63b8]">Aa<Caret /></button>
          </div>
        </Group>
        <Dots className="my-1" />
      </div>
    </div>
  );
}

/* ---------- formula bar ---------- */

function FormulaBar() {
  return (
    <div className="flex h-[18px] border-y border-[#8c8c8c] bg-white font-['Noto_Sans',sans-serif] text-[11px]">
      <input aria-label="Name box" defaultValue="T7" className="w-[116px] shrink-0 border-r border-[#b5b5b5] text-center text-black" />
      <button aria-label="Name list" className="flex w-[17px] shrink-0 items-center justify-center">
        <svg width="6" height="10" viewBox="0 0 6 10"><path d="M3 0 6 4H0zM3 10 0 6h6z" fill="#333" /></svg>
      </button>
      <div className="flex w-[100px] shrink-0 items-center border-x border-[#a8a8a8] bg-[#dcdcdc] pl-[10px]">
        <button aria-label="Cancel"><Svg w={13} h={13}><circle cx="6.500" cy="6.500" r="6.200" fill="#949494" /><path d="m4 4 5 5m0-5-5 5" stroke="#fff" strokeWidth="1.800" /></Svg></button>
        <button aria-label="Accept" className="ml-[10px]"><Svg w={13} h={13}><circle cx="6.500" cy="6.500" r="6.200" fill="#949494" /><path d="m3.500 6.500 2.500 2.500 4-5" stroke="#fff" strokeWidth="1.800" /></Svg></button>
        <span className="ml-[10px] flex h-[15px] w-[18px] items-center justify-center rounded-l-full border-l border-[#a8a8a8]"><span className="h-2 w-2 rounded-full bg-[#b9bcc4]" /></span>
        <button aria-label="Insert function" className="ml-2 font-['Liberation_Serif',serif] text-[15px] font-bold italic leading-4 text-[#222]">fx</button>
      </div>
      <input aria-label="Formula" className="min-w-0 flex-1" />
      <button aria-label="Expand formula bar" className="flex w-4 items-center justify-center border-l border-[#8c8c8c]"><Caret className="bg-[#333]" /></button>
    </div>
  );
}

/* ---------- bottom bars ---------- */

const sheetTabs = [
  { name: "Contents", width: "w-[62px]", tone: "bg-[#dedfe1] text-black" },
  { name: "Summary", width: "w-[63px]", tone: "bg-white text-black font-bold" },
  { name: "Assumptions", width: "w-[83px]", tone: "bg-linear-to-b from-[#5e9a58] to-[#76ad6e] text-white font-medium" },
  { name: "Annual Model", width: "w-[85px]", tone: "bg-[#dedfe1] text-black" },
  { name: "Sensitivity Factors", width: "w-[111px]", tone: "bg-[#f43a3a] text-white font-medium" },
  { name: "Comparison", width: "w-[77px]", tone: "bg-[#dedfe1] text-black" },
  { name: "Cap Exp", width: "w-14", tone: "bg-[#dedfe1] text-black" },
  { name: "Energy Yield in Jordan", width: "w-[131px]", tone: "bg-[#dedfe1] text-black" },
  { name: "Jordan Tax Rates", width: "w-[110px]", tone: "bg-[#dedfe1] text-black" },
];

function SheetTabs() {
  return (
    <div className="flex h-4 border-y border-[#8c8c8c] bg-[#90a4ba]">
      <div className="flex w-[66px] shrink-0 items-center justify-center gap-[9px] bg-linear-to-b from-[#d8d8d8] via-white to-[#d8d8d8]">
        <button aria-label="First sheet"><Svg w={9} h={7}><path d="M1 0v7M9 0 3 3.500 9 7z" fill="#8c8c8c" stroke="#8c8c8c" strokeWidth=".8" /></Svg></button>
        <button aria-label="Previous sheet"><Svg w={6} h={7}><path d="M6 0 0 3.500 6 7z" fill="#8c8c8c" /></Svg></button>
        <button aria-label="Next sheet"><Svg w={6} h={7}><path d="m0 0 6 3.500L0 7z" fill="#222" /></Svg></button>
        <button aria-label="Last sheet"><Svg w={9} h={7}><path d="M8 0v7M0 0l6 3.500L0 7z" fill="#222" stroke="#222" strokeWidth=".8" /></Svg></button>
      </div>
      <div className="ml-3 flex w-[744px] shrink-0 overflow-hidden">
        {sheetTabs.map((tab) => (
          <div key={tab.name} className={`h-[14px] shrink-0 bg-[#4e5560] pb-px pl-px [clip-path:polygon(0_0,100%_0,100%_4px,calc(100%-8px)_100%,3px_100%,0_11px)] ${tab.width}`}>
            <button className={`block h-[13px] w-full overflow-hidden whitespace-nowrap font-[Roboto,sans-serif] text-[11px] leading-[13px] [clip-path:polygon(0_0,100%_0,100%_3px,calc(100%-8px)_100%,3px_100%,0_10px)] ${tab.tone} ${tab.name === "Jordan Tax Rates" ? "pl-2 text-left" : ""}`}>
              {tab.name}
            </button>
          </div>
        ))}
      </div>
      <div className="w-[5px] shrink-0 border-x border-[#9a9a9a] bg-[#dedede]" />
      <div className="flex flex-1 items-center bg-[#f5f5f5] pl-[2px]"><div className="h-2 w-[292px] rounded-full bg-[#bdbdbd]" /></div>
      <div className="flex w-3 items-center justify-center gap-[2px] border-l border-[#8c8c8c] bg-white"><i className="h-2 w-px bg-[#888]" /><i className="h-2 w-px bg-[#888]" /></div>
      <div className="w-4 border-l border-[#8c8c8c] bg-white" />
    </div>
  );
}

function StatusBar() {
  return (
    <div className="mt-px flex h-[18px] bg-linear-to-b from-[#efefef] via-[#dcdddf] to-[#e3e4e6] font-[Roboto,sans-serif] text-[11px] leading-[18px] text-[#222] *:border-[#a0a0a0]">
      <span className="w-[94px] border-r pl-[3px]">Normal View</span>
      <span className="w-[377px] border-r pl-[6px] text-black">Ready</span>
      <span className="w-[158px] border-r" />
      <button className="flex w-[139px] items-center justify-between border-r pl-[3px] pr-[5px] text-black">Sum=0<Caret className="w-2 bg-black" /></button>
      <span className="w-[35px] border-r" />
      <span className="w-[34px] border-r" />
      <span className="w-7 border-r" />
      <span className="flex flex-1 items-end justify-end"><Svg w={12} h={12}><path d="M0 12 12 0M4 12l8-8M8 12l4-4" stroke="#777" /></Svg></span>
    </div>
  );
}

function ViewButtons() {
  return (
    <div className="flex w-[66px] shrink-0 items-center justify-center border-r border-t border-[#8c8c8c] bg-[#e6e6e6] pb-px">
      <div className="flex h-6 w-[59px] overflow-hidden rounded-[3px] border-2 border-[#6f6f6f]">
        <button aria-label="Normal view" className="flex w-[28px] items-center justify-center bg-[#555b61]">
          <Svg w={15} h={12}><path d="M0 0h15v12H0z" fill="#4ba7e6" /><path d="M3.500 0v12M7.500 0v12M11.500 0v12M0 3.500h15M0 7.500h15" stroke="#1d3b52" /></Svg>
        </button>
        <button aria-label="Page layout view" className="flex flex-1 items-center justify-center gap-[3px] bg-[#d2d2d2]">
          {[0, 1].map((i) => <Svg key={i} w={9} h={12}><path d="M.5 .5h8v11h-8z" fill="#fff" stroke="#444" /><path d="M3 0v12M6 0v12M0 4h9M0 8h9" stroke="#444" strokeWidth="1" /></Svg>)}
        </button>
      </div>
    </div>
  );
}

export default function App() {
  return (
    <div className="flex h-screen flex-col overflow-hidden bg-[#e4e4e4]">
      <header className="shrink-0 border-b border-t border-b-[#a9a9a9] border-t-[#2d3446] bg-linear-to-b from-[#ededed] to-[#d2d2d2]">
        <TitleBar />
        <Toolbar />
      </header>
      <RibbonTabs />
      <Ribbon />
      <FormulaBar />
      <main className="mt-px flex min-h-0 flex-1 border-t border-[#8c8c8c] bg-white">
        <div className="min-w-0 flex-1 overflow-hidden"><Sheet /></div>
        <div className="flex w-4 flex-col items-center border-l border-[#8c8c8c] bg-[#f8f8f8]">
          <div className="flex h-3 w-full flex-col items-center justify-center gap-[3px] border-b border-[#8c8c8c] bg-white"><i className="h-px w-2 bg-[#999]" /><i className="h-px w-2 bg-[#999]" /></div>
          <div className="mt-px h-[383px] w-2 rounded-full bg-[#c1c1c1]" />
        </div>
      </main>
      <footer className="flex shrink-0">
        <ViewButtons />
        <div className="min-w-0 flex-1">
          <SheetTabs />
          <StatusBar />
        </div>
      </footer>
    </div>
  );
}
